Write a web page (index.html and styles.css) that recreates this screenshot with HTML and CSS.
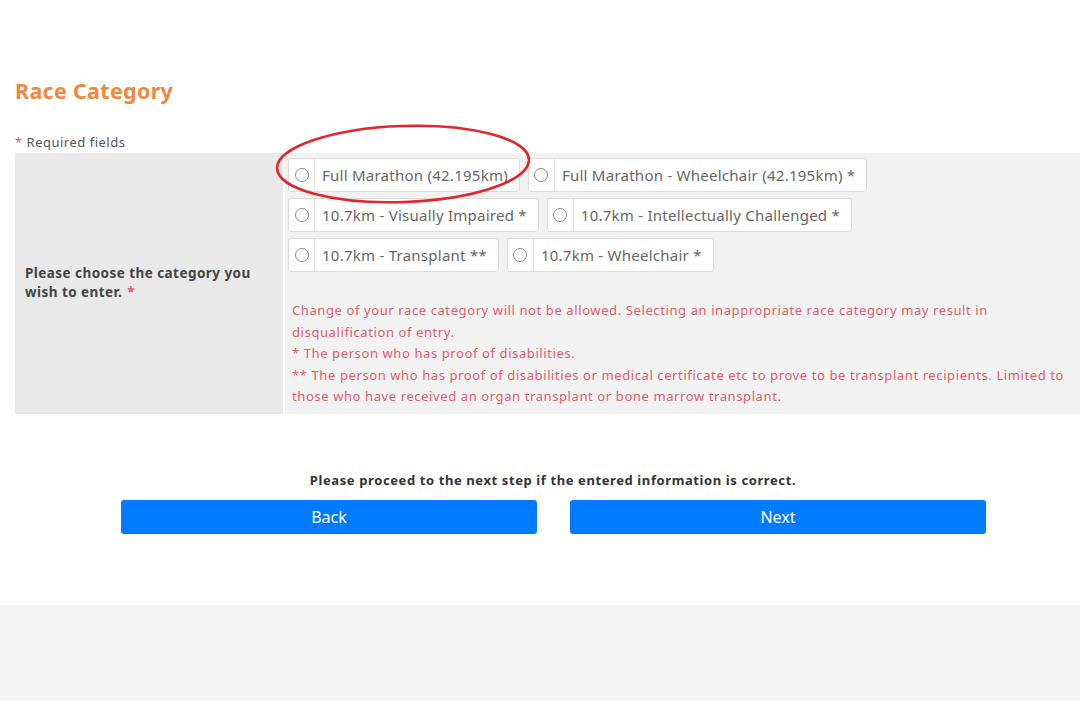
FILE: index.html
```html
<!DOCTYPE html>
<html lang="en">
<head>
<meta charset="utf-8">
<title>Race Category</title>
<link rel="stylesheet" href="styles.css">
</head>
<body>
<main class="page">
  <h1 class="title">Race Category</h1>
  <p class="required"><span class="ast">*</span> Required fields</p>
  <div class="form-table">
    <div class="label-cell">
      <p class="label-text">Please choose the category you<br>wish to enter.<span class="ast req-mark">*</span></p>
    </div>
    <div class="field-cell">
      <div class="opt-row">
        <label class="opt"><span class="radio"><span class="circle"></span></span><span class="opt-text">Full Marathon (42.195km)</span></label>
        <label class="opt"><span class="radio"><span class="circle"></span></span><span class="opt-text">Full Marathon - Wheelchair (42.195km) *</span></label>
      </div>
      <div class="opt-row">
        <label class="opt"><span class="radio"><span class="circle"></span></span><span class="opt-text">10.7km - Visually Impaired *</span></label>
        <label class="opt"><span class="radio"><span class="circle"></span></span><span class="opt-text">10.7km - Intellectually Challenged *</span></label>
      </div>
      <div class="opt-row">
        <label class="opt"><span class="radio"><span class="circle"></span></span><span class="opt-text">10.7km - Transplant **</span></label>
        <label class="opt"><span class="radio"><span class="circle"></span></span><span class="opt-text">10.7km - Wheelchair *</span></label>
      </div>
      <div class="notes">
        Change of your race category will not be allowed. Selecting an inappropriate race category may result in disqualification of entry.<br>
        * The person who has proof of disabilities.<br>
        ** The person who has proof of disabilities or medical certificate etc to prove to be transplant recipients. Limited to those who have received an organ transplant or bone marrow transplant.
      </div>
      <svg class="annot" width="270" height="86" viewBox="0 0 270 86"><ellipse cx="135" cy="43" rx="126" ry="38" transform="rotate(-2 135 43)" fill="none" stroke="#e3262a" stroke-width="2.5"/></svg>
    </div>
  </div>
  <p class="proceed">Please proceed to the next step if the entered information is correct.</p>
  <div class="actions">
    <button class="btn">Back</button>
    <button class="btn">Next</button>
  </div>
</main>
<footer class="footer"></footer>
</body>
</html>
```
FILE: styles.css
```css
* { box-sizing: border-box; }
html, body { margin: 0; padding: 0; background: #fff; }
body { font-family: "Noto Sans", "Liberation Sans", sans-serif; color: #444; }
.page { padding-top: 77px; height: 605px; }
.title { margin: 0 0 0 15px; font-size: 21.5px; line-height: 28px; font-weight: 700; color: #f0883e; letter-spacing: 0.3px; }
.required { margin: 29px 0 0 15px; font-size: 13px; line-height: 16px; color: #555; letter-spacing: 0.5px; }
.ast { color: #e05a6a; }
.req-mark { margin-left: 5px; }
.form-table { display: flex; margin: 3px 0 0 15px; gap: 2px; }
.label-cell { width: 268px; background: #e9e9e9; padding: 0 10px; display: flex; align-items: center; }
.label-text { margin: 0; font-weight: 700; font-size: 13.5px; line-height: 19px; color: #444; letter-spacing: 0.45px; }
.field-cell { flex: 1; background: #f2f2f2; padding: 5px 4px 6px 3px; position: relative; }
.opt-row { display: flex; gap: 8px; margin-bottom: 6px; }
.opt { display: flex; align-items: stretch; background: #fff; border: 1px solid #dcdcdc; border-radius: 3px; height: 34px; font-size: 15px; color: #666; }
.radio { width: 26px; border-right: 1px solid #e2e2e2; display: flex; align-items: center; justify-content: center; }
.circle { width: 14px; height: 14px; border: 1px solid #888; border-radius: 50%; }
.opt-text { display: flex; align-items: center; padding: 0 11px 0 7px; white-space: nowrap; letter-spacing: 0.25px; }
.notes { margin-top: 28px; font-size: 13px; line-height: 21.5px; color: #d9606f; letter-spacing: 0.6px; padding-left: 4px; }
.annot { position: absolute; left: -17px; top: -32px; pointer-events: none; }
.proceed { margin: 58px 0 0 26px; text-align: center; font-size: 13px; font-weight: 700; line-height: 16px; color: #333; letter-spacing: 0.6px; }
.actions { display: flex; gap: 33px; margin-top: 12px; padding-left: 121px; }
.btn { width: 416px; height: 34px; background: #007bff; color: #fff; border: none; border-radius: 3px; font-family: "Noto Sans", "Liberation Sans", sans-serif; font-size: 16px; }
.footer { background: #f4f4f4; height: 96px; }
```
